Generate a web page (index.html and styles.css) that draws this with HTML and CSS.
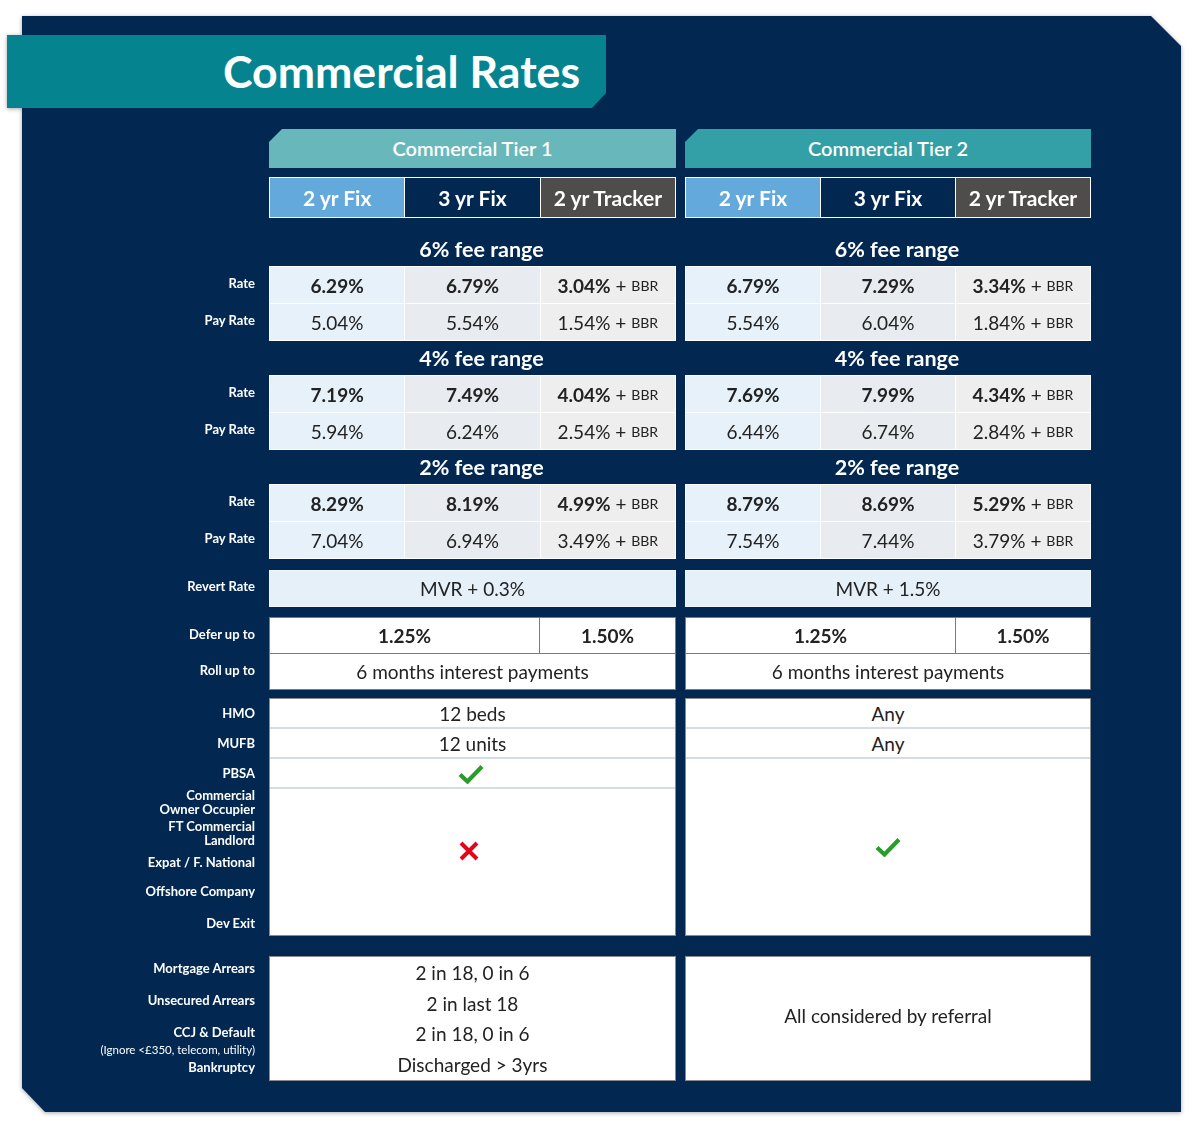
FILE: index.html
```html
<!DOCTYPE html>
<html lang="en">
<head>
<meta charset="utf-8">
<title>Commercial Rates</title>
<link rel="stylesheet" href="styles.css">
</head>
<body>
<div class="panel">
  <div class="banner"><h1 class="title">Commercial Rates</h1></div>

  <div class="band band-tiers">
    <div></div>
    <div class="tier tier1">Commercial Tier 1</div>
    <div class="tier tier2">Commercial Tier 2</div>
  </div>

  <div class="band band-products">
    <div></div>
    <div class="products">
      <div class="prod fix2">2 yr Fix</div><div class="prod fix3">3 yr Fix</div><div class="prod track">2 yr Tracker</div>
    </div>
    <div class="products">
      <div class="prod fix2">2 yr Fix</div><div class="prod fix3">3 yr Fix</div><div class="prod track">2 yr Tracker</div>
    </div>
  </div>

  <div class="band band-fee first">
    <div></div>
    <div class="fee">6% fee range</div>
    <div class="fee">6% fee range</div>
  </div>
  <div class="band">
    <div class="labels rate-labels"><div class="lbl">Rate</div><div class="lbl">Pay Rate</div></div>
    <div class="rates">
      <div class="c c1 b">6.29%</div><div class="c c2 b">6.79%</div><div class="c c3"><b>3.04%</b> + <small>BBR</small></div>
      <div class="c c1">5.04%</div><div class="c c2">5.54%</div><div class="c c3">1.54% + <small>BBR</small></div>
    </div>
    <div class="rates">
      <div class="c c1 b">6.79%</div><div class="c c2 b">7.29%</div><div class="c c3"><b>3.34%</b> + <small>BBR</small></div>
      <div class="c c1">5.54%</div><div class="c c2">6.04%</div><div class="c c3">1.84% + <small>BBR</small></div>
    </div>
  </div>

  <div class="band band-fee">
    <div></div>
    <div class="fee">4% fee range</div>
    <div class="fee">4% fee range</div>
  </div>
  <div class="band">
    <div class="labels rate-labels"><div class="lbl">Rate</div><div class="lbl">Pay Rate</div></div>
    <div class="rates">
      <div class="c c1 b">7.19%</div><div class="c c2 b">7.49%</div><div class="c c3"><b>4.04%</b> + <small>BBR</small></div>
      <div class="c c1">5.94%</div><div class="c c2">6.24%</div><div class="c c3">2.54% + <small>BBR</small></div>
    </div>
    <div class="rates">
      <div class="c c1 b">7.69%</div><div class="c c2 b">7.99%</div><div class="c c3"><b>4.34%</b> + <small>BBR</small></div>
      <div class="c c1">6.44%</div><div class="c c2">6.74%</div><div class="c c3">2.84% + <small>BBR</small></div>
    </div>
  </div>

  <div class="band band-fee">
    <div></div>
    <div class="fee">2% fee range</div>
    <div class="fee">2% fee range</div>
  </div>
  <div class="band">
    <div class="labels rate-labels"><div class="lbl">Rate</div><div class="lbl">Pay Rate</div></div>
    <div class="rates">
      <div class="c c1 b">8.29%</div><div class="c c2 b">8.19%</div><div class="c c3"><b>4.99%</b> + <small>BBR</small></div>
      <div class="c c1">7.04%</div><div class="c c2">6.94%</div><div class="c c3">3.49% + <small>BBR</small></div>
    </div>
    <div class="rates">
      <div class="c c1 b">8.79%</div><div class="c c2 b">8.69%</div><div class="c c3"><b>5.29%</b> + <small>BBR</small></div>
      <div class="c c1">7.54%</div><div class="c c2">7.44%</div><div class="c c3">3.79% + <small>BBR</small></div>
    </div>
  </div>

  <div class="band band-revert">
    <div class="labels revert-labels"><div class="lbl">Revert Rate</div></div>
    <div class="revert">MVR + 0.3%</div>
    <div class="revert">MVR + 1.5%</div>
  </div>

  <div class="band band-defer">
    <div class="labels defer-labels"><div class="lbl">Defer up to</div><div class="lbl">Roll up to</div></div>
    <div class="defer">
      <div class="d b">1.25%</div><div class="d d-right b">1.50%</div>
      <div class="d d-full">6 months interest payments</div>
    </div>
    <div class="defer">
      <div class="d b">1.25%</div><div class="d d-right b">1.50%</div>
      <div class="d d-full">6 months interest payments</div>
    </div>
  </div>

  <div class="band band-hmo">
    <div class="labels hmo-labels">
      <div class="lbl h30">HMO</div>
      <div class="lbl h30">MUFB</div>
      <div class="lbl h30">PBSA</div>
      <div class="lbl two">Commercial<br>Owner Occupier</div>
      <div class="lbl two ft">FT Commercial<br>Landlord</div>
      <div class="lbl expat">Expat / F. National</div>
      <div class="lbl offshore">Offshore Company</div>
      <div class="lbl devexit">Dev Exit</div>
    </div>
    <div class="hmo">
      <div class="hrow">12 beds</div>
      <div class="hrow">12 units</div>
      <div class="hrow">
        <svg class="tick tick-pbsa" width="26" height="20" viewBox="0 0 26 20"><path d="M2 10.5 L9.5 17.5 L24 2.5" fill="none" stroke="#2b9c2a" stroke-width="4.2"/></svg>
      </div>
      <div class="hrest hrest-cross">
        <svg class="cross" width="20" height="20" viewBox="0 0 20 20"><path d="M2 2 L18 18 M18 2 L2 18" fill="none" stroke="#e0061c" stroke-width="4"/></svg>
      </div>
    </div>
    <div class="hmo">
      <div class="hrow">Any</div>
      <div class="hrow">Any</div>
      <div class="hrest">
        <svg class="tick" width="26" height="20" viewBox="0 0 26 20"><path d="M2 10.5 L9.5 17.5 L24 2.5" fill="none" stroke="#2b9c2a" stroke-width="4.2"/></svg>
      </div>
    </div>
  </div>

  <div class="band band-adverse">
    <div class="labels adverse-labels">
      <div class="lbl a1">Mortgage Arrears</div>
      <div class="lbl a2">Unsecured Arrears</div>
      <div class="lbl a3">CCJ &amp; Default</div>
      <div class="lbl note">(Ignore &lt;£350, telecom, utility)</div>
      <div class="lbl a5">Bankruptcy</div>
    </div>
    <div class="adverse">
      <div class="arow r1">2 in 18, 0 in 6</div>
      <div class="arow r2">2 in last 18</div>
      <div class="arow r3">2 in 18, 0 in 6</div>
      <div class="arow r4">Discharged &gt; 3yrs</div>
    </div>
    <div class="adverse referral">All considered by referral</div>
  </div>
</div>
</body>
</html>
```

FILE: styles.css
```css
* { box-sizing: border-box; }

html, body {
  margin: 0;
  padding: 0;
  background: #ffffff;
}

body {
  font-family: Lato, "Open Sans", "Liberation Sans", sans-serif;
  color: #222222;
  height: 1130px;
  overflow: hidden;
}

.panel {
  position: relative;
  width: 1159px;
  margin: 16px 0 0 22px;
  padding: 19px 0 31px 0;
  filter: drop-shadow(0 1px 2px rgba(0, 0, 0, 0.35));
}

.panel::before {
  content: "";
  position: absolute;
  inset: 0;
  z-index: -1;
  background: #022851;
  clip-path: polygon(0 0, calc(100% - 30px) 0, 100% 30px, 100% 100%, 23px 100%, 0 calc(100% - 24px));
}

.banner {
  margin-left: -15px;
  width: 599px;
  height: 73px;
  background: #05848f;
  clip-path: polygon(0 0, 100% 0, 100% calc(100% - 15px), calc(100% - 14px) 100%, 0 100%);
  display: flex;
  justify-content: flex-end;
  align-items: center;
  padding-right: 26px;
}

.title {
  margin: 0;
  color: #ffffff;
  font-size: 44.6px;
  font-weight: 700;
  line-height: 1;
}

.band {
  display: grid;
  grid-template-columns: 238px 407px 406px;
  column-gap: 9px;
}

.band-tiers { margin-top: 21px; }

.tier {
  height: 39px;
  line-height: 39px;
  text-align: center;
  color: #ffffff;
  font-size: 20px;
  font-weight: 600;
  clip-path: polygon(13px 0, 100% 0, 100% 100%, 0 100%, 0 13px);
}
.tier1 { background: #68b8bb; }
.tier2 { background: #339fa6; }

.band-products { margin-top: 9px; }

.products {
  display: grid;
  grid-template-columns: 1fr 1fr 1fr;
  gap: 1px;
  padding: 1px;
  background: #ffffff;
  height: 41px;
}
.prod {
  color: #ffffff;
  font-size: 21px;
  font-weight: 700;
  display: flex;
  align-items: center;
  justify-content: center;
}
.fix2 { background: #63a9db; }
.fix3 { background: #022851; }
.track { background: #4e4d4c; }

.band-fee.first { margin-top: 14px; }

.fee {
  height: 34px;
  line-height: 34px;
  text-align: center;
  color: #ffffff;
  font-size: 21.5px;
  font-weight: 700;
  padding-left: 18px;
}

.labels {
  display: flex;
  flex-direction: column;
  align-items: flex-end;
  padding-right: 5px;
}
.lbl {
  color: #ffffff;
  font-size: 13px;
  font-weight: 700;
  line-height: 14px;
  text-align: right;
}

.rate-labels {
  padding-top: 1px;
  gap: 1px;
}
.rate-labels .lbl {
  height: 36px;
  display: flex;
  align-items: center;
  padding-bottom: 4px;
}

.rates {
  display: grid;
  grid-template-columns: 1fr 1fr 1fr;
  grid-template-rows: 36px 36px;
  gap: 1px;
  padding: 1px;
  background: #ffffff;
}
.c {
  display: flex;
  align-items: center;
  justify-content: center;
  font-size: 19px;
  color: #222222;
  white-space: pre;
}
.c small { font-size: 14px; }
.c b { font-weight: 700; }
.b { font-weight: 700; }
.c1 { background: #e7f1fa; }
.c2 { background: #e8ebef; }
.c3 { background: #eeeeee; }

.band-revert { margin-top: 11px; }
.revert-labels .lbl {
  height: 37px;
  display: flex;
  align-items: center;
  padding-bottom: 6px;
}
.revert {
  height: 37px;
  background: #e6f0f9;
  border: 1px solid #f2f6fa;
  display: flex;
  align-items: center;
  justify-content: center;
  font-size: 19px;
}

.band-defer { margin-top: 10px; }
.defer-labels { padding-top: 1px; }
.defer-labels .lbl {
  height: 36px;
  display: flex;
  align-items: center;
  padding-bottom: 4px;
}
.defer {
  display: grid;
  grid-template-columns: 269px 1fr;
  grid-template-rows: 35px 35px;
  gap: 1px;
  background: #7b7b7b;
  border: 1px solid #7b7b7b;
}
.d {
  background: #ffffff;
  display: flex;
  align-items: center;
  justify-content: center;
  font-size: 19px;
}
.d-full { grid-column: 1 / span 2; }

.band-hmo { margin-top: 8px; }
.hmo-labels .lbl { display: flex; align-items: center; justify-content: flex-end; }
.hmo-labels .h30 { height: 30px; }
.hmo-labels .two { height: 28px; display: block; }
.hmo-labels .ft { margin-top: 3px; }
.hmo-labels .expat { height: 30px; }
.hmo-labels .offshore { height: 28px; }
.hmo-labels .devexit { height: 31px; padding-top: 4px; }

.hmo {
  height: 238px;
  background: #ffffff;
  border: 1px solid #8a8a8a;
  display: flex;
  flex-direction: column;
}
.hrow {
  height: 30px;
  border-bottom: 2px solid #d5dce4;
  display: flex;
  align-items: center;
  justify-content: center;
  font-size: 19px;
  padding-top: 1px;
}
.tick-pbsa { margin-right: 4px; }
.hrest {
  flex: 1;
  display: flex;
  align-items: center;
  justify-content: center;
}
.hrest-cross { padding-bottom: 23px; }
.cross { margin-right: 7px; }

.band-adverse { margin-top: 20px; }
.adverse-labels { padding-top: 5px; }
.adverse-labels .a1 { height: 14px; }
.adverse-labels .a2 { height: 14px; margin-top: 18px; }
.adverse-labels .a3 { height: 14px; margin-top: 18px; }
.adverse-labels .note {
  font-size: 11.5px;
  font-weight: 400;
  height: 13px;
  line-height: 13px;
  margin-top: 4px;
}
.adverse-labels .a5 { height: 14px; margin-top: 4px; }

.adverse {
  height: 125px;
  background: #ffffff;
  border: 1px solid #8a8a8a;
  display: flex;
  flex-direction: column;
}
.arow {
  display: flex;
  align-items: center;
  justify-content: center;
  font-size: 19px;
}
.r1 { height: 31px; }
.r2 { height: 30px; }
.r3 { height: 30px; }
.r4 { height: 32px; }
.referral {
  align-items: center;
  justify-content: center;
  font-size: 19px;
  padding-bottom: 6px;
}
```
